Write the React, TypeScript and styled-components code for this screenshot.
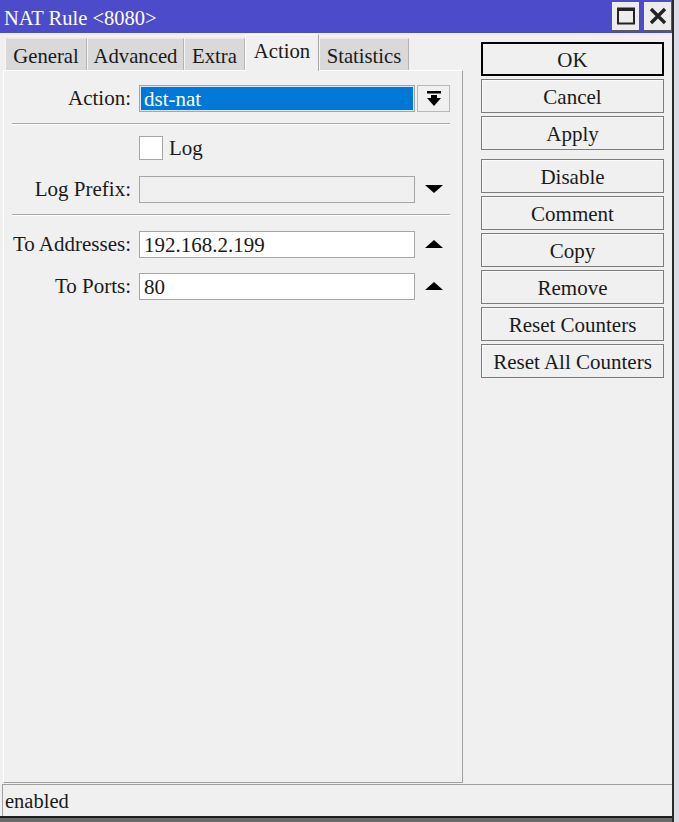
import React from 'react';
import styled, { createGlobalStyle } from 'styled-components';

const Global = createGlobalStyle`
  html, body { margin: 0; padding: 0; background: #3a3a3a; }
  body { font-family: "Liberation Serif", "Times New Roman", serif; }
  * { box-sizing: border-box; }
  #root { width: 679px; height: 822px; }
`;

const Frame = styled.div`
  width: 679px;
  height: 822px;
  display: flex;
  flex-direction: row;
  overflow: hidden;
`;

const Edge = styled.div`
  width: 7px;
  height: 100%;
  border-left: 2px solid #2a2a2a;
  background: #dcdce6;
`;

const Window = styled.div`
  width: 672px;
  height: 100%;
  display: flex;
  flex-direction: column;
  background: #f0f0f0;
  color: #000;
  font-size: 21px;
`;

const TitleBar = styled.div`
  height: 33px;
  flex: none;
  background: #4c4cca;
  display: flex;
  align-items: center;
  justify-content: space-between;
  padding: 3px 0 0 4px;
`;

const Title = styled.span`
  color: #fff;
  font-size: 20.5px;
  line-height: 1;
`;

const TitleButtons = styled.div`
  display: flex;
  gap: 3px;
  align-self: flex-start;
  margin-top: -2px;
`;

const TitleButton = styled.div`
  width: 29px;
  height: 30px;
  background: #ececec;
  border: 1px solid #5a5a5a;
  display: flex;
  align-items: center;
  justify-content: center;
`;

const Main = styled.div`
  flex: 1;
  display: flex;
  flex-direction: row;
  min-height: 0;
`;

const LeftColumn = styled.div`
  width: 467px;
  display: flex;
  flex-direction: column;
  padding: 0 4px 1px 3px;
`;

const TabsRow = styled.div`
  height: 37px;
  display: flex;
  align-items: flex-end;
  padding-left: 2px;
`;

const Tab = styled.div<{ $active?: boolean; $w: number }>`
  width: ${p => p.$w}px;
  height: ${p => (p.$active ? 37 : 32)}px;
  background: ${p => (p.$active ? '#f0f0f0' : '#d9d9d9')};
  border-left: 1px solid ${p => (p.$active ? '#ffffff' : '#f4f4f4')};
  border-top: 1px solid ${p => (p.$active ? '#ffffff' : '#e6e6e6')};
  border-right: 1px solid ${p => (p.$active ? '#a8a8a8' : '#b4b4b4')};
  display: flex;
  align-items: center;
  justify-content: center;
  padding-top: ${p => (p.$active ? 0 : 3)}px;
  padding-bottom: ${p => (p.$active ? 4 : 0)}px;
  font-size: 20.7px;
  color: #1a1a1a;
  position: relative;
  z-index: ${p => (p.$active ? 1 : 0)};
  margin-bottom: ${p => (p.$active ? -1 : 0)}px;
`;

const Panel = styled.div`
  flex: 1;
  border-top: 1px solid #ffffff;
  border-left: 1px solid #ffffff;
  border-right: 1px solid #a0a0a0;
  border-bottom: 1px solid #a0a0a0;
  display: flex;
  flex-direction: column;
  padding-top: 13px;
`;

const Row = styled.div<{ $mt?: number }>`
  display: grid;
  grid-template-columns: 127px 276px 33px;
  column-gap: 8px;
  align-items: center;
  height: 27px;
  margin-top: ${p => p.$mt ?? 0}px;
  & > :nth-child(3) { margin-left: -6px; }
`;

const Label = styled.div`
  text-align: right;
  font-size: 21px;
  line-height: 27px;
  white-space: nowrap;
  color: #1a1a1a;
  padding-top: 1px;
`;

const Field = styled.div<{ $variant?: 'selected' | 'disabled' | 'normal' }>`
  height: 27px;
  border: 1px solid #a6a6a6;
  background: ${p =>
    p.$variant === 'selected' ? '#0078d7' : p.$variant === 'disabled' ? '#f0f0f0' : '#ffffff'};
  box-shadow: ${p => (p.$variant === 'selected' ? 'inset 0 0 0 1px #d8e6f3' : 'none')};
  color: ${p => (p.$variant === 'selected' ? '#ffffff' : '#1a1a1a')};
  font-size: 21px;
  line-height: 26px;
  padding-left: 4px;
  white-space: nowrap;
  overflow: hidden;
`;

const DropButton = styled.div`
  width: 33px;
  height: 27px;
  border: 1px solid #b8b8b8;
  background: #f0f0f0;
  display: flex;
  align-items: center;
  justify-content: center;
`;

const ArrowCell = styled.div`
  width: 33px;
  height: 27px;
  display: flex;
  align-items: center;
  justify-content: center;
`;

const Separator = styled.div<{ $mt: number }>`
  margin: ${p => p.$mt}px 0 0 8px;
  width: 438px;
  height: 2px;
  border-top: 1px solid #a8a8a8;
  border-bottom: 1px solid #ffffff;
`;

const CheckRow = styled.div`
  display: flex;
  align-items: center;
  gap: 6px;
  margin: 11px 0 0 135px;
  height: 24px;
`;

const CheckBox = styled.div`
  width: 24px;
  height: 24px;
  border: 1px solid #a6a6a6;
  background: #ffffff;
`;

const CheckLabel = styled.span`
  font-size: 21px;
  color: #1a1a1a;
`;

const RightColumn = styled.div`
  display: flex;
  flex-direction: column;
  padding: 9px 0 0 14px;
  gap: 3px;
`;

const Button = styled.div<{ $default?: boolean; $gapBefore?: boolean }>`
  width: 183px;
  height: 34px;
  border: ${p => (p.$default ? '2px solid #000000' : '1px solid #7c7c7c')};
  box-shadow: ${p => (p.$default ? 'none' : 'inset 1px 1px 0 #fafafa')};
  background: #f0f0f0;
  display: flex;
  align-items: center;
  justify-content: center;
  padding-top: 2px;
  font-size: 21px;
  color: #1a1a1a;
  margin-top: ${p => (p.$gapBefore ? 6 : 0)}px;
`;

const StatusBar = styled.div`
  height: 32px;
  flex: none;
  margin-left: 2px;
  border-top: 1px solid #a0a0a0;
  border-left: 1px solid #a0a0a0;
  display: flex;
  align-items: center;
  padding: 2px 0 0 2px;
  font-size: 20.5px;
  color: #1a1a1a;
`;

const BottomStrip = styled.div`
  height: 6px;
  flex: none;
  border-top: 2px solid #1e1e1e;
  background: #6a6a6a;
`;

const MaximizeIcon = () => (
  <svg width="18" height="18" viewBox="0 0 18 18">
    <rect x="1" y="1.5" width="16" height="15" fill="none" stroke="#222" strokeWidth="2" />
    <rect x="1" y="1" width="16" height="3" fill="#222" />
  </svg>
);

const CloseIcon = () => (
  <svg width="18" height="18" viewBox="0 0 18 18">
    <path d="M2 2 L16 16 M16 2 L2 16" stroke="#222" strokeWidth="3.4" />
  </svg>
);

const DropIcon = () => (
  <svg width="16" height="17" viewBox="0 0 16 17">
    <rect x="1" y="1" width="14" height="2.5" fill="#000" />
    <rect x="5" y="5" width="6" height="4" fill="#000" />
    <polygon points="1,8 15,8 8,16" fill="#000" />
  </svg>
);

const TriDown = () => (
  <svg width="18" height="9" viewBox="0 0 18 9">
    <polygon points="0,0 18,0 9,8" fill="#000" />
  </svg>
);

const TriUp = () => (
  <svg width="18" height="9" viewBox="0 0 18 9">
    <polygon points="0,8 18,8 9,0" fill="#000" />
  </svg>
);

const tabs = [
  { name: 'General', w: 82 },
  { name: 'Advanced', w: 97 },
  { name: 'Extra', w: 61 },
  { name: 'Action', w: 74, active: true },
  { name: 'Statistics', w: 90 },
];

const buttons = [
  { name: 'OK', def: true },
  { name: 'Cancel' },
  { name: 'Apply' },
  { name: 'Disable', gap: true },
  { name: 'Comment' },
  { name: 'Copy' },
  { name: 'Remove' },
  { name: 'Reset Counters' },
  { name: 'Reset All Counters' },
];

export default function App() {
  return (
    <>
      <Global />
      <Frame>
        <Window>
          <TitleBar>
            <Title>NAT Rule &lt;8080&gt;</Title>
            <TitleButtons>
              <TitleButton><MaximizeIcon /></TitleButton>
              <TitleButton><CloseIcon /></TitleButton>
            </TitleButtons>
          </TitleBar>
          <Main>
            <LeftColumn>
              <TabsRow>
                {tabs.map(t => (
                  <Tab key={t.name} $w={t.w} $active={t.active}>{t.name}</Tab>
                ))}
              </TabsRow>
              <Panel>
                <Row>
                  <Label>Action:</Label>
                  <Field $variant="selected">dst-nat</Field>
                  <DropButton><DropIcon /></DropButton>
                </Row>
                <Separator $mt={12} />
                <CheckRow>
                  <CheckBox />
                  <CheckLabel>Log</CheckLabel>
                </CheckRow>
                <Row $mt={15}>
                  <Label>Log Prefix:</Label>
                  <Field $variant="disabled" />
                  <ArrowCell><TriDown /></ArrowCell>
                </Row>
                <Separator $mt={12} />
                <Row $mt={14}>
                  <Label>To Addresses:</Label>
                  <Field>192.168.2.199</Field>
                  <ArrowCell><TriUp /></ArrowCell>
                </Row>
                <Row $mt={15}>
                  <Label>To Ports:</Label>
                  <Field>80</Field>
                  <ArrowCell><TriUp /></ArrowCell>
                </Row>
              </Panel>
            </LeftColumn>
            <RightColumn>
              {buttons.map(b => (
                <Button key={b.name} $default={b.def} $gapBefore={b.gap}>{b.name}</Button>
              ))}
            </RightColumn>
          </Main>
          <StatusBar>enabled</StatusBar>
          <BottomStrip />
        </Window>
        <Edge />
      </Frame>
    </>
  );
}
